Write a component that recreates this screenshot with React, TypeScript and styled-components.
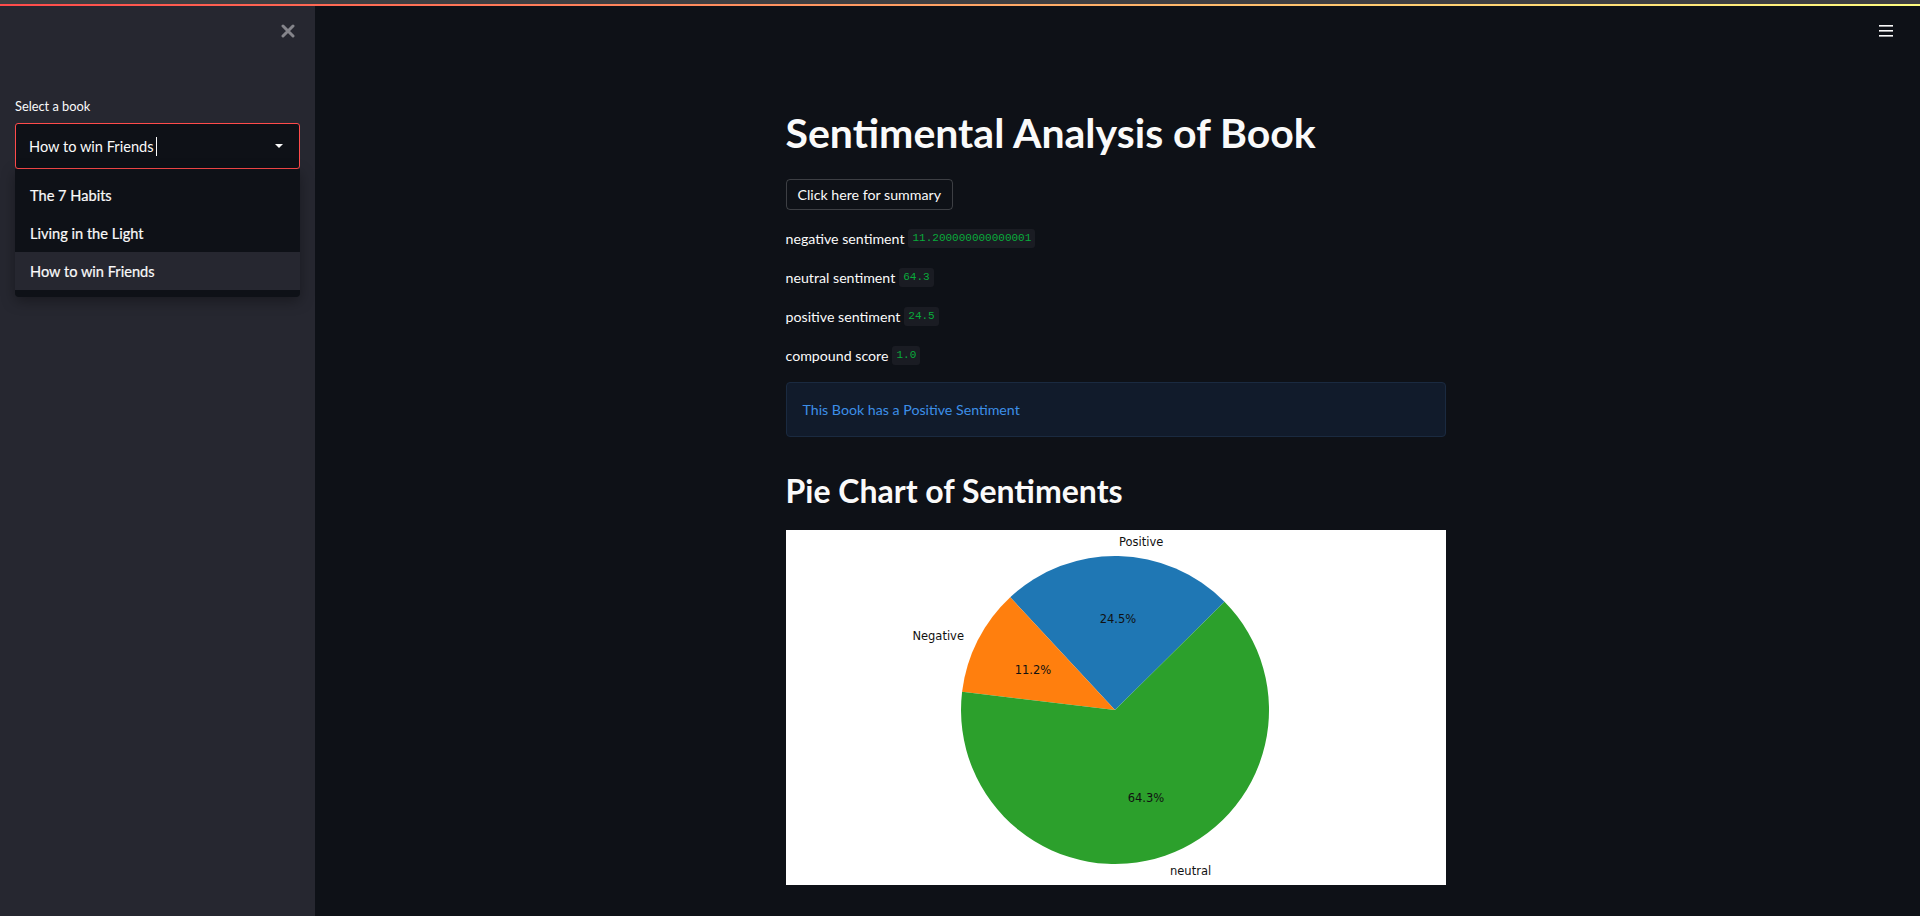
import React from "react";
import styled, { createGlobalStyle } from "styled-components";

const Global = createGlobalStyle`
  html, body { margin: 0; padding: 0; background: #0e1117; }
  body { font-family: "Source Sans Pro", Lato, "Noto Sans", sans-serif; color: #fafafa; }
  * { box-sizing: border-box; }
`;

const Page = styled.div`
  display: flex;
  flex-direction: column;
  height: 916px;
  overflow: hidden;
`;

const ChromeStrip = styled.div`
  height: 4px;
  background: #3e3e41;
  flex: none;
`;

const Decoration = styled.div`
  height: 2px;
  flex: none;
  background: linear-gradient(90deg, #ff4b4b, #fffd80);
`;

const Body = styled.div`
  flex: 1;
  display: flex;
  min-height: 0;
`;

const Sidebar = styled.aside`
  width: 315px;
  flex: none;
  background: #262730;
  padding: 0 15px;
  display: flex;
  flex-direction: column;
`;

const CloseRow = styled.div`
  display: flex;
  justify-content: flex-end;
  padding: 18px 5px 0 0;
  height: 92px;
`;

const CloseButton = styled.button`
  background: none;
  border: none;
  padding: 0;
  width: 14px;
  height: 14px;
  display: flex;
  cursor: pointer;
`;

const FieldLabel = styled.label`
  font-size: 12.8px;
  line-height: 16px;
  color: #fafafa;
  margin-bottom: 9px;
`;

const SelectWrap = styled.div`
  position: relative;
`;

const SelectBox = styled.div`
  height: 46px;
  border: 1px solid #ff4b4b;
  border-radius: 3px;
  background: #0e1117;
  display: flex;
  align-items: center;
  padding: 0 16px 0 13px;
  font-size: 14.6px;
`;

const SelectValue = styled.span`
  flex: 1;
  display: flex;
  align-items: center;
`;

const Caret = styled.span`
  width: 1px;
  height: 19px;
  background: #fafafa;
  margin-left: 2px;
`;

const Menu = styled.ul`
  position: absolute;
  top: 100%;
  left: 0;
  right: 0;
  margin: 0;
  padding: 7px 0 7px;
  list-style: none;
  background: #0e1117;
  border-radius: 0 0 4px 4px;
  box-shadow: 0 4px 14px rgba(0, 0, 0, 0.35);
`;

const MenuItem = styled.li<{ $active?: boolean }>`
  height: 38px;
  display: flex;
  align-items: center;
  padding-left: 15px;
  font-size: 14.6px;
  color: #fafafa;
  -webkit-text-stroke: 0.2px #fafafa;
  background: ${(p) => (p.$active ? "#262730" : "transparent")};
`;

const Main = styled.main`
  flex: 1;
  display: flex;
  flex-direction: column;
  background: #0e1117;
`;

const Toolbar = styled.div`
  height: 40px;
  display: flex;
  justify-content: flex-end;
  padding: 19px 27px 0 0;
`;

const Content = styled.div`
  width: 660px;
  margin: 0 auto;
  padding-top: 62px;
  display: flex;
  flex-direction: column;
  transform: translateX(-2px);
`;

const Title = styled.h1`
  margin: 0;
  font-size: 41px;
  line-height: 50px;
  font-weight: 700;
  color: #fafafa;
`;

const Button = styled.button`
  align-self: flex-start;
  margin-top: 21px;
  height: 31px;
  padding: 0 11px;
  border: 1px solid rgba(250, 250, 250, 0.2);
  border-radius: 4px;
  background: transparent;
  color: #fafafa;
  font-family: inherit;
  font-size: 14.2px;
`;

const Line = styled.div<{ $first?: boolean }>`
  margin-top: ${(p) => (p.$first ? "16px" : "15px")};
  height: 24px;
  display: flex;
  align-items: center;
  font-size: 14.2px;
  color: #fafafa;
`;

const Code = styled.code`
  font-family: "Liberation Mono", "DejaVu Sans Mono", monospace;
  font-size: 11px;
  line-height: 19px;
  height: 19px;
  color: #09ab3b;
  background: #1a1c23;
  border-radius: 3px;
  padding: 0 4px;
  margin-left: 4px;
`;

const InfoBox = styled.div`
  margin-top: 15px;
  height: 55px;
  display: flex;
  align-items: center;
  padding: 0 16px;
  background: #111b2b;
  border: 1px solid #1a2a40;
  border-radius: 4px;
  color: #3d8fe8;
  font-size: 14.2px;
`;

const Subtitle = styled.h2`
  margin: 34px 0 0;
  font-size: 32px;
  line-height: 40px;
  font-weight: 700;
  color: #fafafa;
`;

const Figure = styled.div`
  margin-top: 19px;
  width: 660px;
  height: 355px;
  background: #ffffff;
`;

const PieText = styled.text`
  font-family: "DejaVu Sans", sans-serif;
  font-size: 11.5px;
  fill: #111;
`;

const books = ["The 7 Habits", "Living in the Light", "How to win Friends"];

export default function App() {
  const cx = 329;
  const cy = 180;
  return (
    <>
      <Global />
      <Page>
        <ChromeStrip />
        <Decoration />
        <Body>
          <Sidebar>
            <CloseRow>
              <CloseButton aria-label="Close sidebar">
                <svg width="14" height="14" viewBox="0 0 14 14">
                  <path d="M2 2 L12 12 M12 2 L2 12" stroke="#85858b" strokeWidth="3" strokeLinecap="round" />
                </svg>
              </CloseButton>
            </CloseRow>
            <FieldLabel>Select a book</FieldLabel>
            <SelectWrap>
              <SelectBox>
                <SelectValue>
                  How to win Friends
                  <Caret />
                </SelectValue>
                <svg width="8" height="4" viewBox="0 0 8 4">
                  <path d="M0 0 H8 L4 4 Z" fill="#fafafa" />
                </svg>
              </SelectBox>
              <Menu>
                {books.map((b) => (
                  <MenuItem key={b} $active={b === "How to win Friends"}>
                    {b}
                  </MenuItem>
                ))}
              </Menu>
            </SelectWrap>
          </Sidebar>
          <Main>
            <Toolbar>
              <svg width="14" height="12" viewBox="0 0 14 12">
                <rect x="0" y="0" width="14" height="1.6" fill="#fafafa" />
                <rect x="0" y="5" width="14" height="1.6" fill="#fafafa" />
                <rect x="0" y="10" width="14" height="1.6" fill="#fafafa" />
              </svg>
            </Toolbar>
            <Content>
              <Title>Sentimental Analysis of Book</Title>
              <Button>Click here for summary</Button>
              <Line $first>
                negative sentiment<Code>11.200000000000001</Code>
              </Line>
              <Line>
                neutral sentiment<Code>64.3</Code>
              </Line>
              <Line>
                positive sentiment<Code>24.5</Code>
              </Line>
              <Line>
                compound score<Code>1.0</Code>
              </Line>
              <InfoBox>This Book has a Positive Sentiment</InfoBox>
              <Subtitle>Pie Chart of Sentiments</Subtitle>
              <Figure>
                <svg width="660" height="355" viewBox="0 0 660 355">
                  <path d={`M${cx},${cy} L438.5,71.7 A154,154 0 0 0 224.2,67.2 Z`} fill="#1f77b4" />
                  <path d={`M${cx},${cy} L224.2,67.2 A154,154 0 0 0 176.1,161.8 Z`} fill="#ff7f0e" />
                  <path d={`M${cx},${cy} L176.1,161.8 A154,154 0 1 0 438.5,71.7 Z`} fill="#2ca02c" />
                  <PieText x="333" y="12" dominantBaseline="central">Positive</PieText>
                  <PieText x="332" y="89" textAnchor="middle" dominantBaseline="central">24.5%</PieText>
                  <PieText x="178" y="106" textAnchor="end" dominantBaseline="central">Negative</PieText>
                  <PieText x="247" y="140" textAnchor="middle" dominantBaseline="central">11.2%</PieText>
                  <PieText x="384" y="341" dominantBaseline="central">neutral</PieText>
                  <PieText x="360" y="268" textAnchor="middle" dominantBaseline="central">64.3%</PieText>
                </svg>
              </Figure>
            </Content>
          </Main>
        </Body>
      </Page>
    </>
  );
}
